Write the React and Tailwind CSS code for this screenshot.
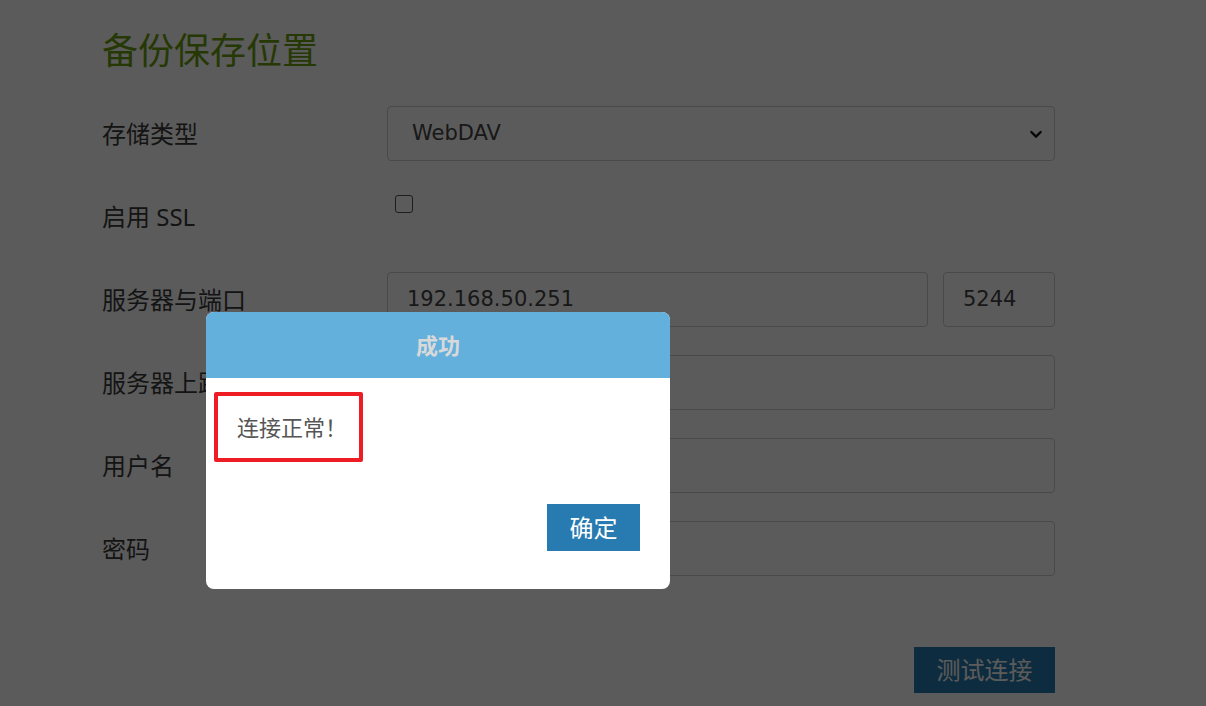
const font = { fontFamily: '"Noto Sans", "Noto Sans CJK SC", sans-serif' }

function Row({ label, children }) {
    return (
        <div className="flex items-center h-[55px]">
            <div className="w-[285px] shrink-0 text-[24px] text-[#3a3a3a]">{label}</div>
            <div className="flex-1 flex h-full gap-[15px]">{children}</div>
        </div>
    )
}

function Field({ value, className = 'flex-1' }) {
    return (
        <div className={`${className} h-full border border-[#ccc] rounded-[4px] bg-white flex items-center px-[19px] text-[21px] text-[#444] font-['DejaVu_Sans',sans-serif]`}>
            {value}
        </div>
    )
}

export default function App() {
    return (
        <div className="relative w-[1206px] h-[706px] overflow-hidden bg-white" style={font}>
            <div className="pl-[102px] pr-[151px] pt-[24px]">
                <h1 className="text-[36px] leading-[54px] text-[#6aa010] font-normal">备份保存位置</h1>
                <div className="mt-[28px] flex flex-col gap-[28px]">
                    <Row label="存储类型">
                        <div className="flex-1 h-full border border-[#ccc] rounded-[4px] bg-white flex items-center justify-between pl-[24px] pr-[10px] text-[21px] text-[#444] font-['DejaVu_Sans',sans-serif]">
                            <span>WebDAV</span>
                            <svg width="16" height="16" viewBox="0 0 24 24" fill="none" stroke="#111" strokeWidth="3.5" strokeLinecap="round" strokeLinejoin="round"><polyline points="5 9 12 16 19 9"></polyline></svg>
                        </div>
                    </Row>
                    <Row label="启用 SSL">
                        <div className="h-full pl-[8px] pt-[6px]">
                            <div className="w-[18px] h-[18px] border-[1.5px] border-[#555] rounded-[3px] bg-white"></div>
                        </div>
                    </Row>
                    <Row label="服务器与端口">
                        <Field value="192.168.50.251" />
                        <Field value="5244" className="w-[112px]" />
                    </Row>
                    <Row label="服务器上路径">
                        <Field value="" />
                    </Row>
                    <Row label="用户名">
                        <Field value="" />
                    </Row>
                    <Row label="密码">
                        <Field value="" />
                    </Row>
                </div>
                <div className="mt-[71px] flex justify-end">
                    <button className="w-[141px] h-[46px] bg-[#277bb0] text-white text-[24px]">测试连接</button>
                </div>
            </div>

            <div className="absolute inset-0 bg-[rgba(0,0,0,0.645)]"></div>

            <div className="absolute left-[206px] top-[312px] w-[464px] h-[277px] bg-white rounded-[8px] overflow-hidden flex flex-col">
                <div className="h-[66px] bg-[#63b0dd] flex items-center justify-center text-[22px] font-bold text-[#d9d9d9]">成功</div>
                <div className="pl-[8px] pt-[14px]">
                    <div className="w-[149px] h-[70px] border-[4px] border-[#ee1c25] rounded-[2px] flex items-center pl-[19px] text-[22px] text-[#555]">连接正常！</div>
                </div>
                <div className="flex justify-end pr-[30px] mt-[42px]">
                    <button className="w-[93px] h-[47px] bg-[#277bb0] text-white text-[24px]">确定</button>
                </div>
            </div>
        </div>
    )
}
